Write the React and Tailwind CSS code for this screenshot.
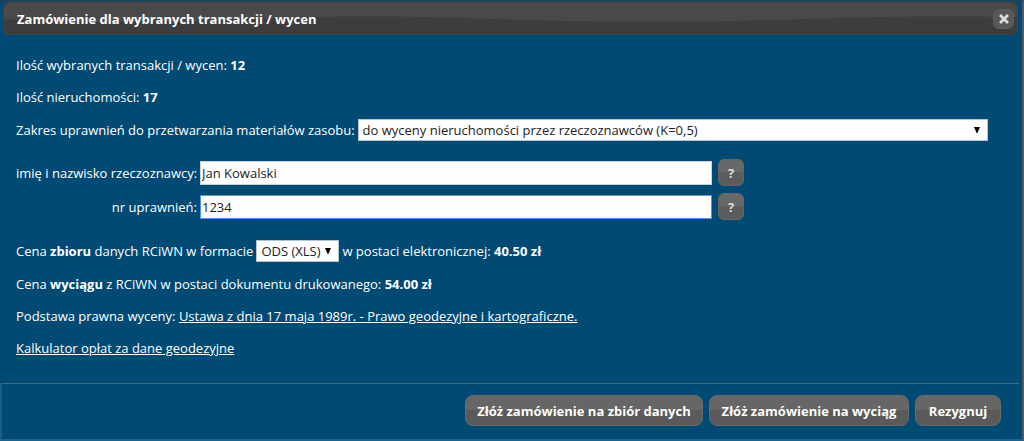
import React from 'react'

function Select({ id, label, className, children }) {
    return (
        <div className={`relative text-[#222] ${className}`}>
            <select id={id} aria-label={label} className="block w-full h-[22px] appearance-none border border-[#b5c4ce] bg-white pl-1 pr-3 leading-5 outline-none">
                {children}
            </select>
            <svg viewBox="0 0 6 6" className="pointer-events-none absolute right-2 top-2 h-[6px] w-[6px]" fill="#000" aria-hidden="true">
                <path d="M0 0H6L3.4 6H2.6Z" />
            </svg>
        </div>
    )
}

function Field({ id, label, value, focused }) {
    return (
        <>
            <label htmlFor={id} className="pr-[3px] text-right whitespace-nowrap">{label}</label>
            <input
                id={id}
                type="text"
                defaultValue={value}
                className={`h-6 w-full border bg-white px-px text-[#222] outline-none ${focused ? 'border-[#4d90fe]' : 'border-[#c8d2d8]'}`}
            />
            <button type="button" aria-label={`Pomoc: ${label}`} className="h-[27px] w-[26px] rounded-md border border-[#666] bg-linear-to-b from-[#686868] from-50% to-[#5c5c5c] to-50% text-[13px] font-bold text-[#ddd]">
                ?
            </button>
        </>
    )
}

function ActionButton({ children, className }) {
    return (
        <button type="button" className={`h-[31px] rounded-lg border border-[#6a6a6a] bg-linear-to-b from-[#666] from-50% to-[#5a5a5a] to-50% text-center font-bold whitespace-nowrap text-white ${className}`}>
            {children}
        </button>
    )
}

export default function App() {
    return (
        <div className="border-t-2 border-r-2 border-b-2 border-t-[#1c435c] border-r-[#505a60] border-b-[#1e638e] bg-[#004a73] font-['Open_Sans','Noto_Sans',sans-serif] text-[13px] leading-5 text-white">
            <header className="relative ml-[3px] mr-1 flex h-[33px] items-center justify-between overflow-hidden rounded-md border border-[#444] bg-[#3d3d3d] pl-[13px] pr-[3px]">
                <svg viewBox="0 0 1016 33" preserveAspectRatio="none" className="absolute inset-0 h-full w-full" aria-hidden="true">
                    <path d="M0 0H1016V15C960 14 900 14 840 16C770 18 720 20 640 20C560 20 520 18 460 16C400 14 340 14 300 15C240 18 200 20 130 20C70 20 40 19 0 17Z" fill="#494949" />
                </svg>
                <h1 className="relative text-[13px] font-bold">Zamówienie dla wybranych transakcji / wycen</h1>
                <button type="button" aria-label="Zamknij" className="relative flex h-5 w-[21px] items-center justify-center rounded-md border border-[#5e5e5e] bg-[#585858]">
                    <svg viewBox="0 0 10 10" className="h-[10px] w-[10px]" fill="none" stroke="#dcdcdc" strokeWidth="2.8" aria-hidden="true">
                        <path d="M1 1L9 9M9 1L1 9" />
                    </svg>
                </button>
            </header>

            <main className="flex flex-col gap-3 px-4 pt-5 pb-[25px]">
                <p>Ilość wybranych transakcji / wycen: <b>12</b></p>
                <p>Ilość nieruchomości: <b>17</b></p>
                <div className="flex items-center pr-[18px]">
                    <label htmlFor="zakres" className="pr-[3px] whitespace-nowrap">Zakres uprawnień do przetwarzania materiałów zasobu:</label>
                    <Select id="zakres" className="flex-1">
                        <option>do wyceny nieruchomości przez rzeczoznawców (K=0,5)</option>
                    </Select>
                </div>
                <div className="grid grid-cols-[184px_minmax(0,512px)_26px] items-center gap-y-[7px] pt-1.5 pb-2 [&>button]:ml-[6px]">
                    <Field id="nazwisko" label="imię i nazwisko rzeczoznawcy:" value="Jan Kowalski" />
                    <Field id="uprawnienia" label="nr uprawnień:" value="1234" focused />
                </div>
                <div className="flex items-center gap-[3px]">
                    <span>Cena <b>zbioru</b> danych RCiWN w formacie</span>
                    <Select id="format" label="Format danych" className="w-[83px]">
                        <option>ODS (XLS)</option>
                    </Select>
                    <span>w postaci elektronicznej: <b>40.50 zł</b></span>
                </div>
                <p>Cena <b>wyciągu</b> z RCiWN w postaci dokumentu drukowanego: <b>54.00 zł</b></p>
                <p>
                    Podstawa prawna wyceny:{' '}
                    <a href="#ustawa" className="underline">Ustawa z dnia 17 maja 1989r. - Prawo geodezyjne i kartograficzne.</a>
                </p>
                <p><a href="#kalkulator" className="underline">Kalkulator opłat za dane geodezyjne</a></p>
            </main>

            <footer className="border-l-2 border-l-[#1e5c84]">
                <div className="mr-[3px] flex justify-end gap-[6px] border-t border-[#3f6c86] pt-[11px] pr-[18px] pb-[13px]">
                    <ActionButton className="w-[238px]">Złóż zamówienie na zbiór danych</ActionButton>
                    <ActionButton className="w-[200px]">Złóż zamówienie na wyciąg</ActionButton>
                    <ActionButton className="w-[86px]">Rezygnuj</ActionButton>
                </div>
            </footer>
        </div>
    )
}
